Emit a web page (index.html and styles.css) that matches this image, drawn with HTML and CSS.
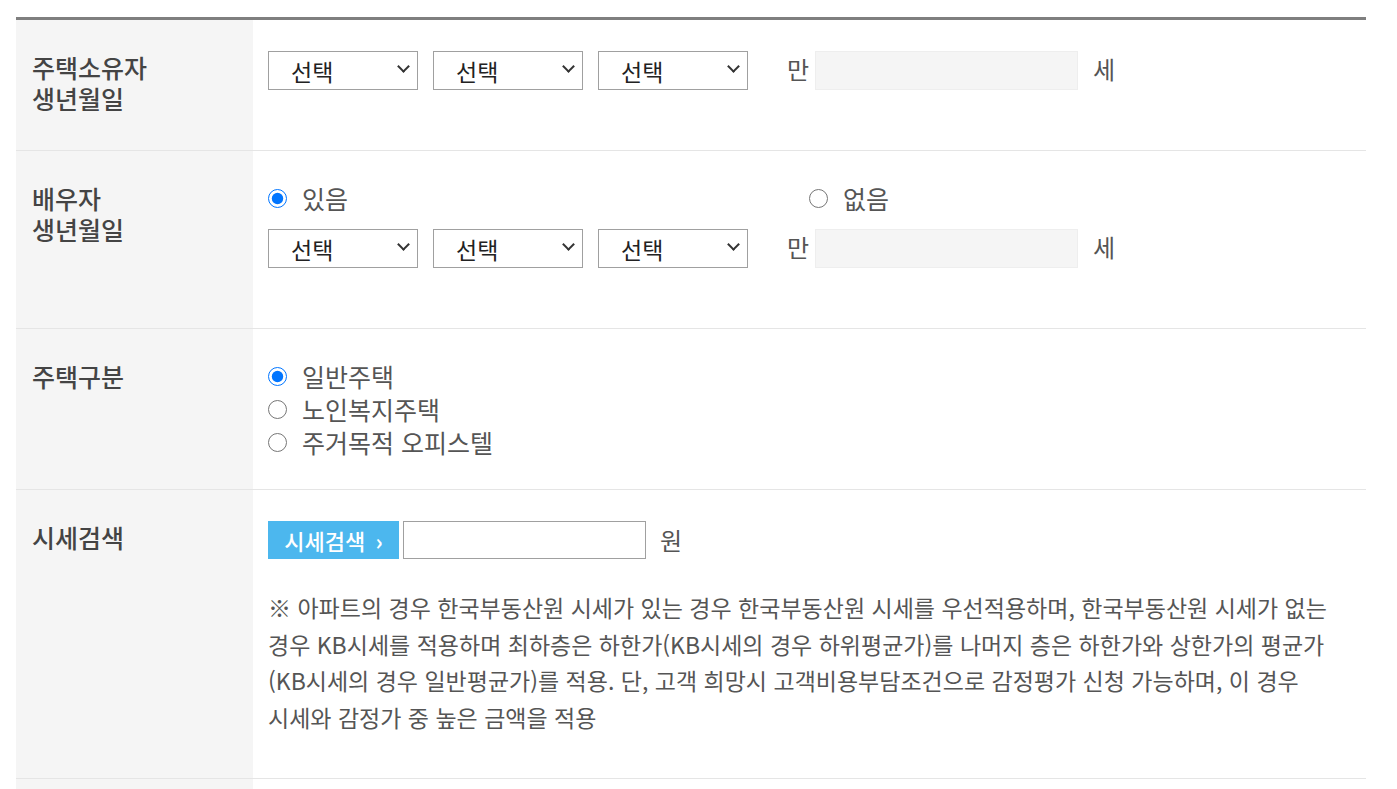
FILE: index.html
```html
<!DOCTYPE html>
<html lang="ko">
<head>
    <meta charset="UTF-8">
    <meta name="viewport" content="width=device-width, initial-scale=1.0">
    <title>주택연금 예상연금 조회</title>
    <link rel="stylesheet" href="styles.css">
</head>
<body>
    <div class="container">
        <table class="form-table">
            <tbody>
                <tr class="row-owner">
                    <th>주택소유자<br>생년월일</th>
                    <td>
                        <div class="birth">
                            <span class="sel-wrap"><select class="sel"><option>선택</option></select></span>
                            <span class="sel-wrap"><select class="sel"><option>선택</option></select></span>
                            <span class="sel-wrap"><select class="sel"><option>선택</option></select></span>
                            <span class="unit unit-man">만</span>
                            <input type="text" class="age" readonly>
                            <span class="unit unit-se">세</span>
                        </div>
                    </td>
                </tr>
                <tr class="row-spouse">
                    <th>배우자<br>생년월일</th>
                    <td>
                        <div class="radios inline">
                            <label class="radio first"><input type="radio" name="spouse" checked> 있음</label>
                            <label class="radio"><input type="radio" name="spouse"> 없음</label>
                        </div>
                        <div class="birth">
                            <span class="sel-wrap"><select class="sel"><option>선택</option></select></span>
                            <span class="sel-wrap"><select class="sel"><option>선택</option></select></span>
                            <span class="sel-wrap"><select class="sel"><option>선택</option></select></span>
                            <span class="unit unit-man">만</span>
                            <input type="text" class="age" readonly>
                            <span class="unit unit-se">세</span>
                        </div>
                    </td>
                </tr>
                <tr class="row-type">
                    <th>주택구분</th>
                    <td>
                        <div class="radios stack">
                            <label class="radio"><input type="radio" name="htype" checked> 일반주택</label>
                            <label class="radio"><input type="radio" name="htype"> 노인복지주택</label>
                            <label class="radio"><input type="radio" name="htype"> 주거목적 오피스텔</label>
                        </div>
                    </td>
                </tr>
                <tr class="row-price">
                    <th>시세검색</th>
                    <td>
                        <div class="price">
                            <button class="btn-search">시세검색 <span class="arrow">›</span></button>
                            <input type="text" class="price-input">
                            <span class="unit">원</span>
                        </div>
                        <p class="note">※ 아파트의 경우 한국부동산원 시세가 있는 경우 한국부동산원 시세를 우선적용하며, 한국부동산원 시세가 없는 경우 KB시세를 적용하며 최하층은 하한가(KB시세의 경우 하위평균가)를 나머지 층은 하한가와 상한가의 평균가(KB시세의 경우 일반평균가)를 적용. 단, 고객 희망시 고객비용부담조건으로 감정평가 신청 가능하며, 이 경우 시세와 감정가 중 높은 금액을 적용</p>
                    </td>
                </tr>
                <tr class="row-next">
                    <th></th>
                    <td></td>
                </tr>
            </tbody>
        </table>
    </div>
</body>
</html>
```

FILE: styles.css
```css
body {
    margin: 0;
    padding: 0;
    background-color: #fff;
    font-family: "Noto Sans CJK KR", "Noto Sans", sans-serif;
    color: #555;
}

.container {
    width: 1350px;
    margin: 17px 0 0 16px;
}

.form-table {
    width: 100%;
    border-collapse: collapse;
    border-top: 3px solid #7f7f7f;
}

.form-table th,
.form-table td {
    vertical-align: top;
    border-bottom: 1px solid #e5e5e5;
}

.form-table th {
    width: 221px;
    padding: 32px 0 0 16px;
    background-color: #f5f5f5;
    color: #444;
    font-size: 25px;
    font-weight: 500;
    line-height: 31px;
    text-align: left;
}

.form-table td {
    padding: 31px 16px 0 15px;
}

.row-owner td { height: 99px; }
.row-spouse td { height: 146px; }
.row-type td { height: 129px; }
.row-price td { height: 257px; }
.row-next td { height: 60px; }

.birth {
    display: flex;
    align-items: center;
    gap: 15px;
}

.sel-wrap {
    position: relative;
    display: block;
}

.sel-wrap::after {
    content: "";
    position: absolute;
    top: 11px;
    right: 10px;
    width: 7px;
    height: 7px;
    border-right: 2px solid #333;
    border-bottom: 2px solid #333;
    transform: rotate(45deg);
    pointer-events: none;
}

.sel {
    display: block;
    width: 150px;
    height: 39px;
    padding: 0 0 0 22px;
    border: 1px solid #a0a0a0;
    border-radius: 0;
    background-color: #fff;
    color: #222;
    font-family: inherit;
    font-size: 23px;
    appearance: none;
    -webkit-appearance: none;
}

.unit {
    font-size: 24px;
    color: #555;
    line-height: 1;
}

.unit-man {
    margin-left: 24px;
    margin-right: -9px;
    margin-top: -3px;
}

.unit-se {
    margin-top: -3px;
}

.age {
    width: 263px;
    height: 39px;
    box-sizing: border-box;
    border: 1px solid #eee;
    background-color: #f5f5f5;
}

.radios {
    font-size: 25px;
    line-height: 33px;
    color: #555;
}

.radios.inline {
    display: flex;
    margin-bottom: 14px;
}

.radios.stack {
    display: flex;
    flex-direction: column;
}

.radio {
    display: flex;
    align-items: center;
    gap: 15px;
}

.radio.first {
    width: 541px;
}

.radio input {
    width: 19px;
    height: 19px;
    margin: 0;
    accent-color: #0075ff;
}

.price {
    display: flex;
    align-items: center;
}

.btn-search {
    width: 131px;
    height: 38px;
    padding: 0;
    border: none;
    background-color: #4cb7ee;
    color: #fff;
    font-family: inherit;
    font-size: 22px;
    font-weight: 500;
}

.btn-search .arrow {
    margin-left: 4px;
    font-weight: 700;
}

.price-input {
    width: 243px;
    height: 38px;
    box-sizing: border-box;
    margin: 0 14px 0 4px;
    border: 1px solid #a0a0a0;
}

.note {
    margin: 30px 0 0;
    font-size: 23px;
    line-height: 36.5px;
    color: #555;
    word-break: keep-all;
}
```
